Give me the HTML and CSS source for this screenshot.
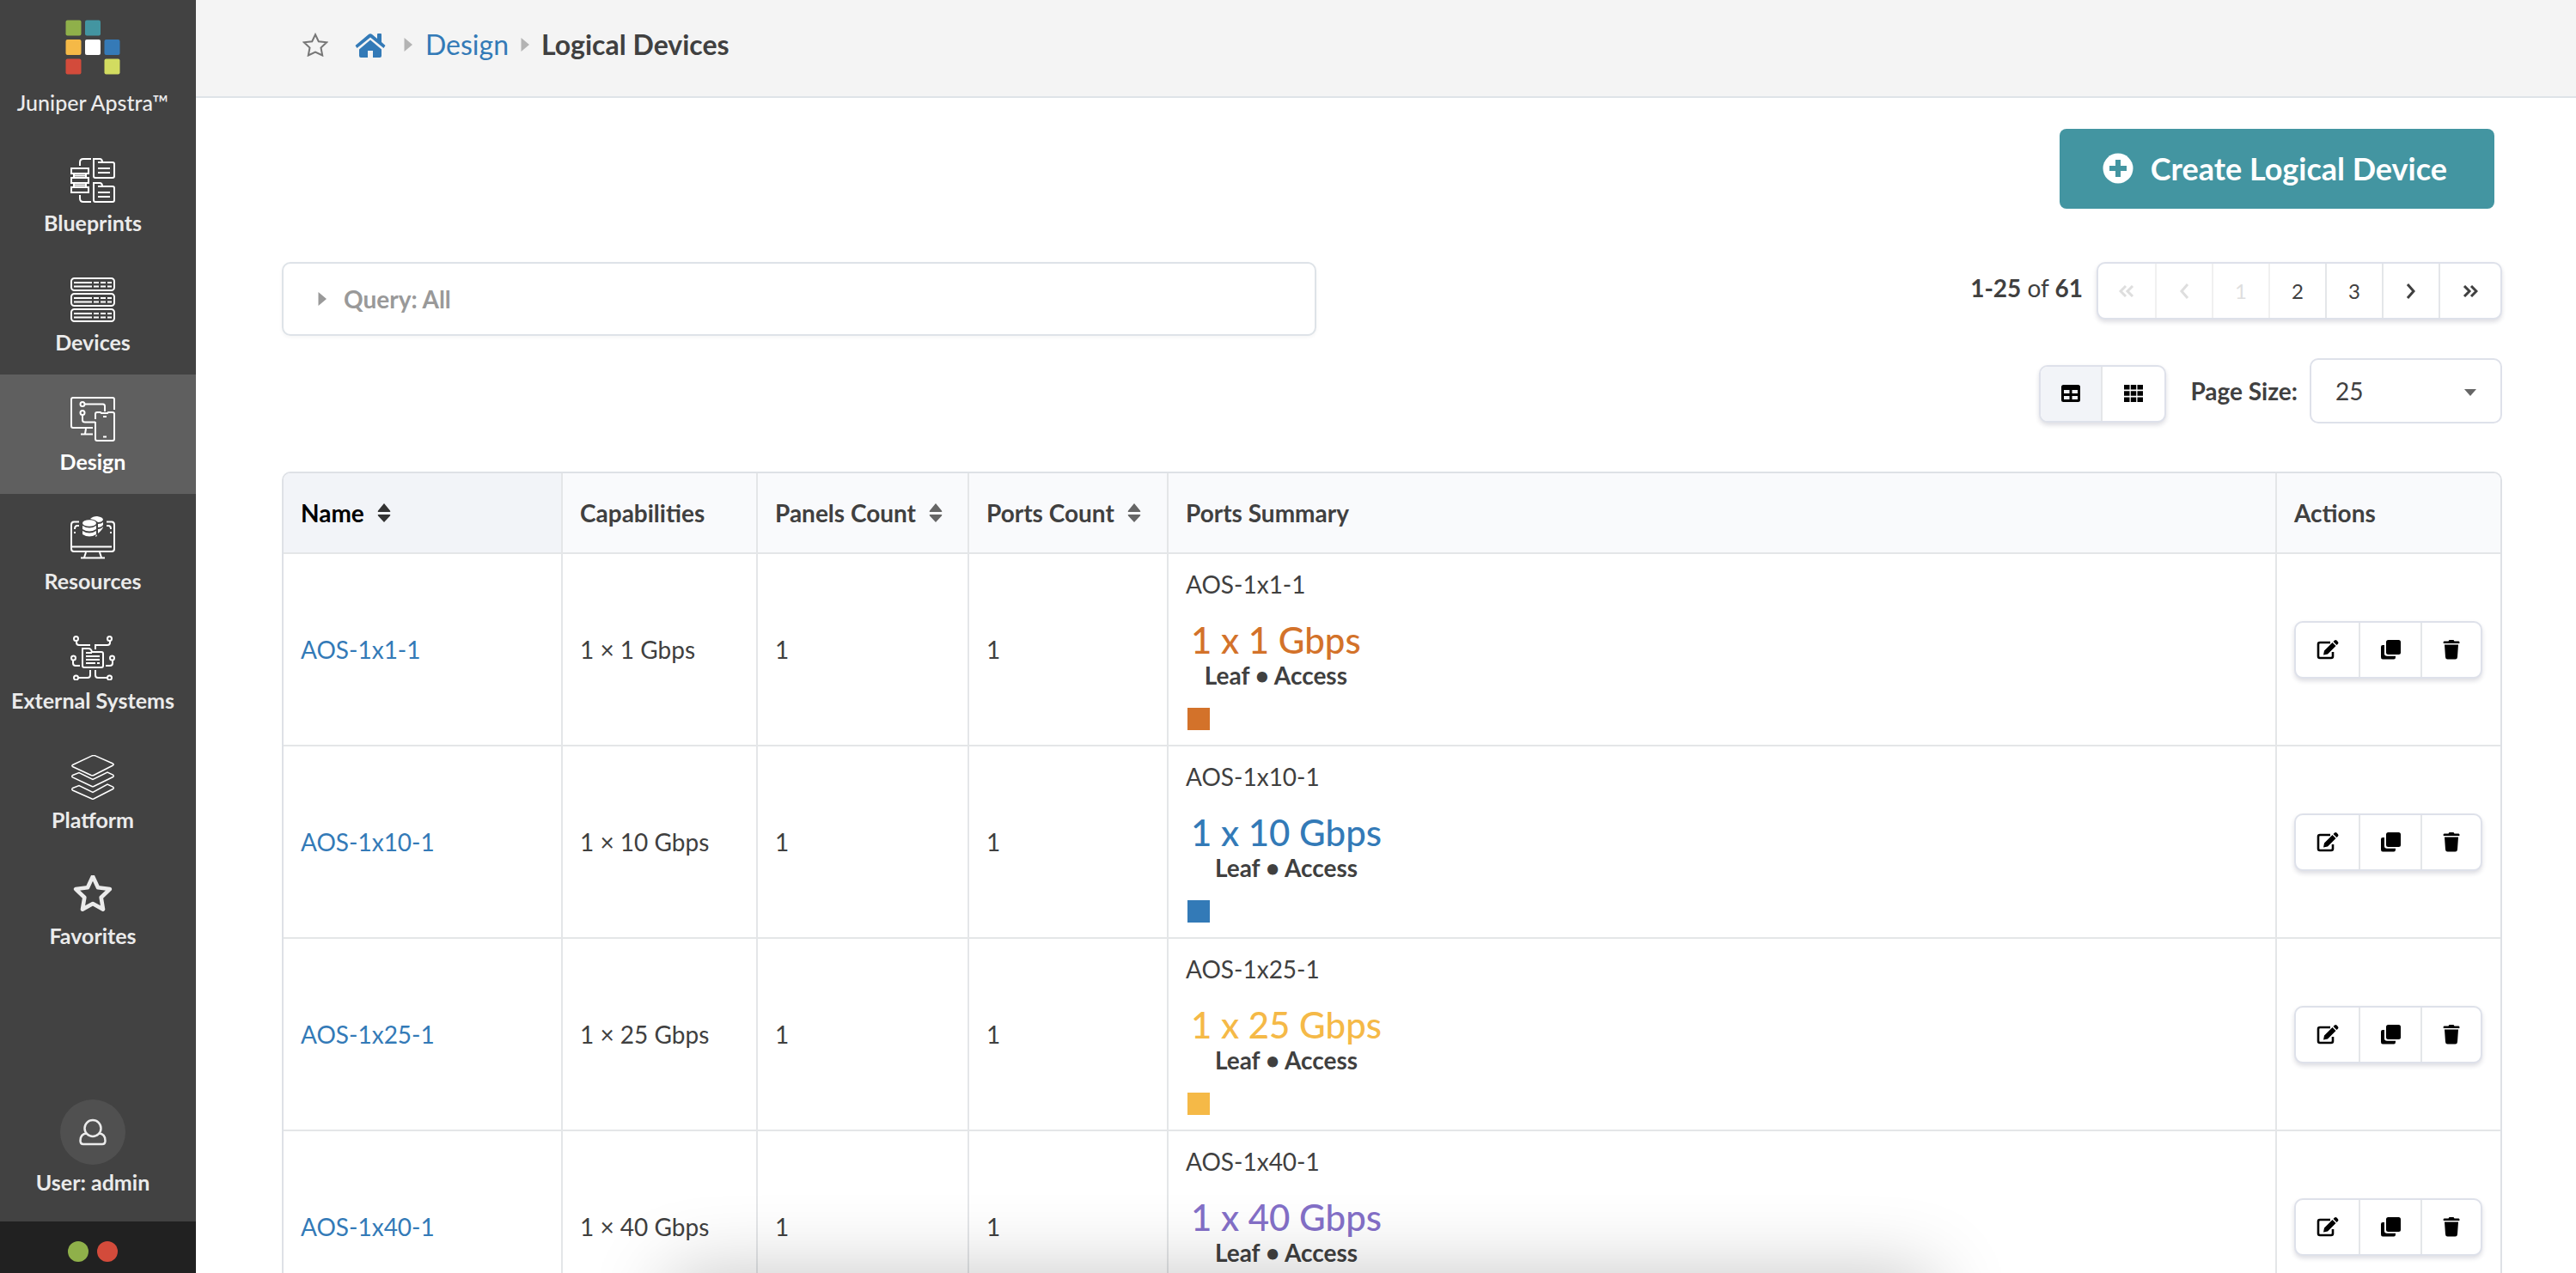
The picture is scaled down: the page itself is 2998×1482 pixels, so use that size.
FILE: index.html
```html
<!DOCTYPE html>
<html lang="en">
<head>
<meta charset="utf-8">
<title>Logical Devices</title>
<link rel="stylesheet" href="styles.css">
</head>
<body>
<svg class="sprite" aria-hidden="true">
  <symbol id="i-caret" viewBox="0 0 10 16"><path d="M.5 0 10 8 .5 16Z"/></symbol>
  <symbol id="i-sort" viewBox="0 0 16 22"><path d="M8 0 15 8.500Q16 10 14.500 10H1.500Q0 10 1 8.500ZM8 22 1 14.500Q0 13 1.500 13H14.500Q16 13 15 14.500Z"/></symbol>
  <symbol id="i-star" viewBox="0 3 52 50"><path d="M26 4.500 32.500 18.500 47.500 20.500 36.500 31 39 46 26 38.800 13 46 15.500 31 4.500 20.500 19.500 18.500Z" fill="none" stroke="currentColor" stroke-width="5" stroke-linejoin="round"/></symbol>
  <symbol id="i-edit" viewBox="0 0 26 24"><path d="M16 4H4Q2 4 2 6V20Q2 22 4 22H17Q19 22 19 20V15" fill="none" stroke="currentColor" stroke-width="2.600"/><path d="M8 18.500 9 13.500 18.500 4 22.500 8 13 17.500ZM19.500 3 21 1.500Q22 .5 23.500 1.500L25 3.200Q26 4.500 25 5.500L23.500 7Z"/></symbol>
  <symbol id="i-copy" viewBox="0 0 24 24"><rect x="7" y="1" width="17" height="17" rx="2.500"/><path d="M5 7H3Q1 7 1 9V21Q1 23.500 3 23.500H16Q18 23.500 18 21V19.800H8Q5 19.800 5 17Z"/></symbol>
  <symbol id="i-trash" viewBox="0 0 20 24"><path d="M1.500 2.500H6.500L7.500 1H12.500L13.500 2.500H18.500Q19.500 2.500 19.500 4T18.500 5H1.500Q.5 5 .5 4T1.500 2.500ZM2 6.500H18L17 21Q16.800 23.500 14.500 23.500H5.500Q3.200 23.500 3 21Z"/></symbol>
</svg>
<div class="app">
  <nav class="sidebar">
    <a class="brand" href="#">
      <svg width="64" height="64" viewBox="0 0 64 64"><rect x=".5" y=".5" width="18" height="18" rx="2" fill="#8fb04a"/><rect x="23" y=".5" width="18" height="18" rx="2" fill="#4395a1"/><rect x=".5" y="23" width="18" height="18" rx="2" fill="#f5b947"/><rect x="23" y="23" width="18" height="18" rx="2" fill="#fff"/><rect x="45.500" y="23" width="18" height="18" rx="2" fill="#357ab7"/><rect x=".5" y="45.500" width="18" height="18" rx="2" fill="#d34b3b"/><rect x="45.500" y="45.500" width="18" height="18" rx="2" fill="#d2dc60"/></svg>
      <span>Juniper Apstra™</span>
    </a>
    <a class="item" href="#">
      <svg class="line" viewBox="0 0 52 52"><path d="M11 9V5Q11 1 15 1H24M11 43V47Q11 51 15 51H24M1 12H21V18H1ZM1 23H21V29H1ZM1 34H21V40H1ZM4 18V23M18 18V23M4 29V34M18 29V34M4 20.500H18M4 31.500H18M27 1H34Q37 1 37 5H49Q51 5 51 7V21Q51 23 49 23H29Q27 23 27 21ZM32 12H46M32 17H46M32 5H37M27 29H34Q37 29 37 33H49Q51 33 51 35V49Q51 51 49 51H29Q27 51 27 49ZM32 40H46M32 45H46M32 33H37"/></svg>
      <span>Blueprints</span>
    </a>
    <a class="item" href="#">
      <svg class="line" viewBox="0 0 52 52"><rect x="1" y="1" width="50" height="14" rx="3.500"/><rect x="1" y="19" width="50" height="14" rx="3.500"/><rect x="1" y="37" width="50" height="14" rx="3.500"/><path d="M4 6H25M4 10.500H25M27 6H33M27 10.500H33M35 6H41M35 10.500H41M43 6H48M43 10.500H48M4 24H25M4 28.500H25M27 24H33M27 28.500H33M35 24H41M35 28.500H41M43 24H48M43 28.500H48M4 42H25M4 46.500H25M27 42H33M27 46.500H33M35 42H41M35 46.500H41M43 42H48M43 46.500H48"/></svg>
      <span>Devices</span>
    </a>
    <a class="item active" href="#">
      <svg class="line" viewBox="0 0 52 52"><path d="M26 36H3Q1 36 1 34V3Q1 1 3 1H49Q51 1 51 3V15M18 37 17 43M12 43.500H26M17 8.500H38Q40 8.500 40 11V17M14 21V27Q14 29.500 17 29.500H29M29 26V20Q29 18 31 18H35L36 19H43L44 18H49Q51 18 51 20V49Q51 51 49 51H31Q29 51 29 49V29M38 23H42M38 46.500H42"/><circle cx="14" cy="8.500" r="2.500"/><circle cx="14" cy="18.500" r="2.500"/></svg>
      <span>Design</span>
    </a>
    <a class="item" href="#">
      <svg class="line" viewBox="0 0 52 52"><path d="M10 6.500H4Q1 6.500 1 10V38Q1 41 4 41H48Q51 41 51 38V10Q51 6.500 48 6.500H42M2 35.500H48M18 42 16 48M34 42 36 48M12 48.500H40M10 11H8Q5 11 5 15M5 18V20M42 11H44Q47 11 47 15M47 18V20"/><g class="solid"><ellipse cx="22" cy="8" rx="8" ry="3.800"/><path d="M14 11Q22 16 30 11V15Q22 20 14 15ZM14 17Q22 22 30 17V21Q22 26 14 21ZM23 3Q26 0 31 0 38 1 38 4 37 7 32 7 29 4 23 3ZM32 9Q36 9 38 7V10Q36 13 32 13ZM32 15Q36 15 38 12 38 15 32 20ZM30 21 31 23 29 24Z"/></g></svg>
      <span>Resources</span>
    </a>
    <a class="item" href="#">
      <svg class="line" viewBox="0 0 52 52"><path d="M7 6V8Q7 11 10 11H23M46 6V8Q46 11 43 11H29V16M3 29V32Q3 35 6 35H11M49 29V32Q49 35 46 35H41M9 49H20Q23 49 23 46V40M43 49H32Q29 49 29 46V40M14 15H21Q24 15 25 19H36Q38 19 38 21V35Q38 37 36 37H16Q14 37 14 35ZM18 24H34M18 28H34M18 32H29M31 32H34M18 20H25"/><circle cx="6.500" cy="3.500" r="2.500"/><circle cx="45.500" cy="3.500" r="2.500"/><circle cx="3.500" cy="26" r="2.500"/><circle cx="48.500" cy="26" r="2.500"/><circle cx="6.500" cy="49" r="2.500"/><circle cx="45.500" cy="49" r="2.500"/></svg>
      <span>External Systems</span>
    </a>
    <a class="item" href="#">
      <svg class="line thin" viewBox="0 0 52 52"><path d="M25 .9Q27 .2 29 .9L49.500 10Q51 11 49.500 12L27 23.500Q26 24 24 23.500L2.500 13.500Q1 12.500 2.500 11.500ZM2.500 23.500 10 20.500 26 28.500 43 20 49.500 23Q51 24.500 49.500 25.500L27 36.500Q26 37 25 36.500L2.500 26Q1 24.500 2.500 23.500ZM2.500 38.500 10 35.500 26 43.500 43 34 49.500 37Q51 38.500 49.500 39.500L27 51Q26 51.300 25 51L2.500 41Q1 39.500 2.500 38.500Z"/></svg>
      <span>Platform</span>
    </a>
    <a class="item" href="#">
      <svg class="fav" viewBox="0 0 52 50"><use href="#i-star"/></svg>
      <span>Favorites</span>
    </a>
    <a class="user" href="#">
      <span class="avatar"><svg width="32" height="32" viewBox="0 0 32 32"><path d="M9 17.500Q1.500 18 1.500 26 1.500 30 5 30H27Q30.500 30 30.500 26 30.500 18 23 17.500" /><circle cx="16" cy="11.500" r="9.500"/></svg></span>
      <span>User: admin</span>
    </a>
    <div class="status"><i class="dot ok"></i><i class="dot bad"></i></div>
  </nav>
  <div class="page">
    <header class="crumbs">
      <svg class="crumb-star" viewBox="0 0 30 28"><path d="M15 2.200 18.800 10.200 28.200 11.300 21.500 17.500 23.200 26.500 15 22.500 6.800 26.500 8.500 17.500 1.800 11.300 11.200 10.200Z" fill="none" stroke="currentColor" stroke-width="2"/></svg>
      <a class="home" href="#" aria-label="Home"><svg width="36" height="32" viewBox="0 -3 36 32"><path d="M18 7.500 31 18.500V26Q31 28 29 28H21V20H15V28H7Q5 28 5 26V18.500ZM16 1Q18-.6 20 1L26 6V1Q26 0 27 0H30Q31 0 31 1V10L35.500 14 33.500 17 18 4.500 2.500 17 .5 14Z" fill="currentColor"/></svg></a>
      <svg class="caret"><use href="#i-caret"/></svg>
      <a class="crumb" href="#">Design</a>
      <svg class="caret"><use href="#i-caret"/></svg>
      <span class="current">Logical Devices</span>
    </header>
    <main class="content">
      <div class="create-row">
        <button class="create" type="button"><svg width="36" height="36" viewBox="0 0 36 36"><circle cx="18" cy="18" r="17.500" fill="#fff"/><path d="M15 8h6v7h7v6h-7v7h-6v-7h-7v-6h7Z" fill="#4395a1"/></svg>Create Logical Device</button>
      </div>
      <div class="tools">
        <button class="query" type="button"><svg class="caret"><use href="#i-caret"/></svg>Query: All</button>
        <div class="controls">
          <div class="paging">
            <span class="range"><b>1-25</b> of <b>61</b></span>
            <div class="group pager">
              <button type="button" disabled aria-label="First page"><svg width="18" height="14" viewBox="0 0 18 14"><path d="M8 1 2 7 8 13M16 1 10 7 16 13"/></svg></button>
              <button type="button" disabled aria-label="Previous page"><svg width="18" height="18" viewBox="0 0 18 18"><path d="M13 1 6 9 13 17"/></svg></button>
              <button type="button" disabled>1</button>
              <button type="button">2</button>
              <button type="button">3</button>
              <button type="button" aria-label="Next page"><svg width="18" height="18" viewBox="0 0 18 18"><path d="M5 1 12 9 5 17"/></svg></button>
              <button type="button" aria-label="Last page"><svg width="18" height="14" viewBox="0 0 18 14"><path d="M2 1 8 7 2 13M10 1 16 7 10 13"/></svg></button>
            </div>
          </div>
          <div class="sizing">
            <div class="group views">
              <button class="on" type="button" aria-label="Table view"><svg width="22" height="20" viewBox="0 0 22 20"><path fill-rule="evenodd" d="M2.500 0H19.500Q22 0 22 2.500V17.500Q22 20 19.500 20H2.500Q0 20 0 17.500V2.500Q0 0 2.500 0ZM3 6V10H9.500V6ZM12.500 6V10H19V6ZM3 13V17H9.500V13ZM12.500 13V17H19V13Z"/></svg></button>
              <button type="button" aria-label="Card view"><svg width="22" height="20" viewBox="0 0 22 20"><path d="M0 0H6.500V5.500H0ZM7.800 0H14.200V5.500H7.800ZM15.500 0H22V5.500H15.500ZM0 7.200H6.500V12.800H0ZM7.800 7.200H14.200V12.800H7.800ZM15.500 7.200H22V12.800H15.500ZM0 14.500H6.500V20H0ZM7.800 14.500H14.200V20H7.800ZM15.500 14.500H22V20H15.500Z"/></svg></button>
            </div>
            <label for="size">Page Size:</label>
            <div class="select"><select id="size"><option>25</option></select><svg width="14" height="8" viewBox="0 0 14 8"><path d="M0 0H14L7 8Z"/></svg></div>
          </div>
        </div>
      </div>
      <div class="table-wrap">
      <table>
        <colgroup><col class="c-name"><col class="c-cap"><col class="c-panels"><col class="c-ports"><col><col class="c-act"></colgroup>
        <thead><tr><th class="sorted">Name<svg class="sort"><use href="#i-sort"/></svg></th><th>Capabilities</th><th>Panels Count<svg class="sort"><use href="#i-sort"/></svg></th><th>Ports Count<svg class="sort"><use href="#i-sort"/></svg></th><th>Ports Summary</th><th>Actions</th></tr></thead>
        <tbody>
          <tr><td><a href="#">AOS-1x1-1</a></td><td>1 × 1 Gbps</td><td>1</td><td>1</td><td class="orange"><div>AOS-1x1-1</div><div class="cap"><div class="speed">1 x 1 Gbps</div><b>Leaf • Access</b></div><div class="port"></div></td>
          <td><div class="group acts"><button type="button" aria-label="Edit"><svg width="26" height="24"><use href="#i-edit"/></svg></button><button type="button" aria-label="Clone"><svg width="24" height="24"><use href="#i-copy"/></svg></button><button type="button" aria-label="Delete"><svg width="20" height="24"><use href="#i-trash"/></svg></button></div></td></tr>
          <tr><td><a href="#">AOS-1x10-1</a></td><td>1 × 10 Gbps</td><td>1</td><td>1</td><td class="blue"><div>AOS-1x10-1</div><div class="cap"><div class="speed">1 x 10 Gbps</div><b>Leaf • Access</b></div><div class="port"></div></td>
          <td><div class="group acts"><button type="button" aria-label="Edit"><svg width="26" height="24"><use href="#i-edit"/></svg></button><button type="button" aria-label="Clone"><svg width="24" height="24"><use href="#i-copy"/></svg></button><button type="button" aria-label="Delete"><svg width="20" height="24"><use href="#i-trash"/></svg></button></div></td></tr>
          <tr><td><a href="#">AOS-1x25-1</a></td><td>1 × 25 Gbps</td><td>1</td><td>1</td><td class="yellow"><div>AOS-1x25-1</div><div class="cap"><div class="speed">1 x 25 Gbps</div><b>Leaf • Access</b></div><div class="port"></div></td>
          <td><div class="group acts"><button type="button" aria-label="Edit"><svg width="26" height="24"><use href="#i-edit"/></svg></button><button type="button" aria-label="Clone"><svg width="24" height="24"><use href="#i-copy"/></svg></button><button type="button" aria-label="Delete"><svg width="20" height="24"><use href="#i-trash"/></svg></button></div></td></tr>
          <tr><td><a href="#">AOS-1x40-1</a></td><td>1 × 40 Gbps</td><td>1</td><td>1</td><td class="violet"><div>AOS-1x40-1</div><div class="cap"><div class="speed">1 x 40 Gbps</div><b>Leaf • Access</b></div><div class="port"></div></td>
          <td><div class="group acts"><button type="button" aria-label="Edit"><svg width="26" height="24"><use href="#i-edit"/></svg></button><button type="button" aria-label="Clone"><svg width="24" height="24"><use href="#i-copy"/></svg></button><button type="button" aria-label="Delete"><svg width="20" height="24"><use href="#i-trash"/></svg></button></div></td></tr>
        </tbody>
      </table>
      </div>
    </main>
  </div>
</div>
<div class="bottom-shade"></div>
</body>
</html>
```
FILE: styles.css
```css
* { box-sizing: border-box; }
body { margin: 0; font: 28px/36px Lato, "Open Sans", sans-serif; color: #404040; background: #fff; }
a { color: #337ab7; text-decoration: none; }
button, select { font: inherit; color: inherit; }
svg { display: block; flex: none; fill: currentColor; }
.sprite { position: absolute; width: 0; height: 0; }

.app { display: flex; height: 100vh; overflow: hidden; }

.sidebar { flex: none; width: 228px; display: flex; flex-direction: column; background: #424242; font-size: 25px; line-height: 32px; }
.sidebar a { display: flex; flex-direction: column; align-items: center; padding-right: 12px; color: #ebebeb; font-weight: bold; white-space: nowrap; }
.sidebar .brand { height: 158px; padding-top: 23px; gap: 16px; font-weight: 500; }
.sidebar .item { height: 139px; padding-top: 26px; gap: 7px; }
.sidebar .active { background: #5f5f5f; color: #fff; }
.line { width: 52px; height: 52px; fill: none; stroke: #fff; stroke-width: 2; }
.thin { stroke-width: 1.5; }
.solid { fill: #fff; stroke: none; }
.fav { width: 48px; height: 48px; }
.sidebar .user { margin-top: auto; padding-bottom: 30px; gap: 4px; }
.avatar { display: flex; align-items: center; justify-content: center; width: 76px; height: 76px; border-radius: 50%; background: #505050; }
.avatar svg { fill: none; stroke: #ebebeb; stroke-width: 2.500; }
.status { display: flex; justify-content: center; gap: 10px; height: 60px; padding: 23px 12px 0 0; background: #212121; }
.dot { width: 24px; height: 24px; border-radius: 50%; }
.ok { background: #8fb04a; }
.bad { background: #d34b3b; }

.page { flex: 1; min-width: 0; }
.crumbs { display: flex; align-items: center; height: 114px; padding: 0 0 8px 124px; background: #f4f4f4; border-bottom: 2px solid #dee3e8; font-size: 32px; line-height: 40px; }
.crumb-star { width: 30px; height: 28px; color: #767676; }
.home { margin-left: 31px; margin-right: 21px; }
.caret { width: 10px; height: 16px; color: #b3b3b3; }
.crumb { margin: 0 14px 0 15px; }
.current { margin-left: 14px; font-weight: bold; }

.content { padding: 36px 86px 0 100px; }
.create-row { display: flex; justify-content: flex-end; padding-right: 9px; }
.create { display: flex; align-items: center; gap: 20px; height: 93px; padding: 0 55px 2px 50px; border: 0; border-radius: 8px; background: #4395a1; color: #fff; font-size: 36px; font-weight: bold; }

.tools { display: flex; justify-content: space-between; align-items: flex-start; margin-top: 62px; }
.query { display: flex; align-items: center; gap: 20px; width: 1204px; max-width: 50%; height: 86px; padding: 0 40px; border: 2px solid #dee3e8; border-radius: 10px; background: #fff; box-shadow: 0 2px 4px #0000000a; color: #999; font-weight: bold; }
.query .caret { color: #999; }
.controls { display: flex; flex-direction: column; align-items: flex-end; gap: 45px; }
.paging, .sizing { display: flex; align-items: center; }
.paging { gap: 16px; }
.range { padding-bottom: 8px; }
.group { display: flex; width: max-content; height: 67px; border: 2px solid #dee1ea; border-radius: 10px; background: #fff; box-shadow: 0 3px 5px #22244626; overflow: hidden; }
.group button { display: flex; align-items: center; justify-content: center; width: 72px; padding: 0; border: 0; border-right: 2px solid #e4e6e9; background: none; color: #000; }
.group button:last-child { border-right: 0; }
.acts button:first-child { width: 75px; }
.acts button:last-child { width: 68px; }
.group.pager button { width: 66px; font-size: 24px; color: #404040; }
.group.pager button:first-child { width: 68px; }
.group.pager button:last-child { width: 70px; }
.group.pager button:disabled { color: #dedede; border-color: #f0f0f0; }
.pager svg { fill: none; stroke: currentColor; stroke-width: 3; }
.views { margin-top: 6px; }
.views button { width: 72px; }
.views .on { background: #f2f4f8; }
.sizing label { margin: 0 14px 0 28px; font-weight: bold; }
.select { position: relative; width: 224px; height: 76px; }
.select select { width: 100%; height: 100%; padding: 0 28px; border: 2px solid #dee1ea; border-radius: 10px; background: #fff; appearance: none; }
.select svg { position: absolute; right: 30px; top: 36px; color: #666; pointer-events: none; }

.table-wrap { margin-top: 56px; border: 2px solid #dee1e6; border-radius: 10px; overflow: hidden; }
table { width: 100%; table-layout: fixed; border-collapse: separate; border-spacing: 0; }
.c-name { width: 325px; }
.c-cap { width: 227px; }
.c-panels { width: 246px; }
.c-ports { width: 232px; }
.c-act { width: 260px; }
th, td { padding: 0 20px; text-align: left; border-right: 2px solid #e4e6e8; border-bottom: 2px solid #e4e6e8; }
th:last-child, td:last-child { border-right: 0; }
th { height: 94px; background: #f9fafc; }
.sorted { background: #f2f4f8; color: #000; }
.sort { display: inline-block; width: 16px; height: 22px; margin-left: 15px; color: #666; }
.sorted .sort { color: #333; }
td { height: 224px; }
.cap { width: max-content; margin-top: 24px; padding: 0 6px; text-align: center; }
.speed { font-size: 42px; line-height: 46px; }
.cap b { display: block; }
.port { width: 26px; height: 26px; margin: 20px 0 0 2px; background: currentColor; }
.orange .speed, .orange .port { color: #d3722a; }
.blue .speed, .blue .port { color: #337ab7; }
.yellow .speed, .yellow .port { color: #f5b947; }
.violet .speed, .violet .port { color: #8470c8; }
.speed { font-weight: 500; }

.bottom-shade { position: fixed; left: 26%; right: 25%; bottom: -100px; height: 100px; box-shadow: 0 0 90px #0000003a; pointer-events: none; }
```
